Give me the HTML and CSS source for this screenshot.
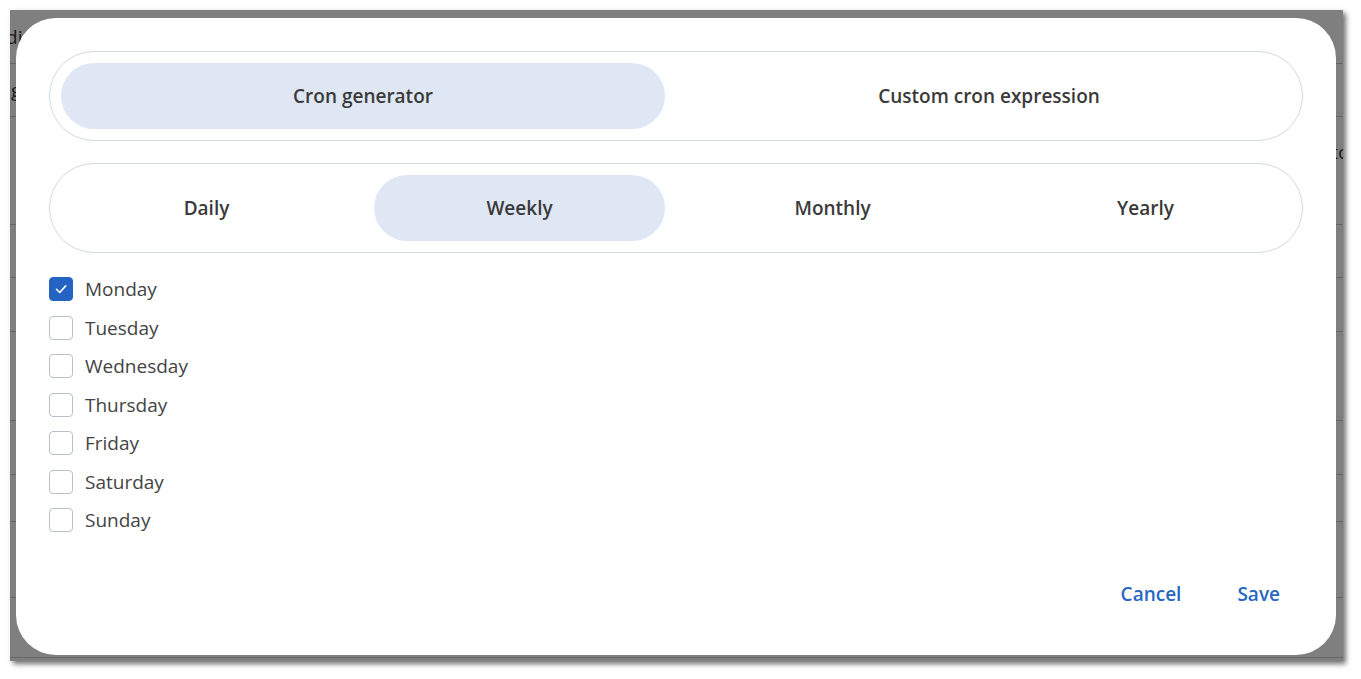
FILE: index.html
```html
<!DOCTYPE html>
<html lang="en">
<head>
<meta charset="utf-8">
<title>Cron generator</title>
<link rel="stylesheet" href="styles.css">
</head>
<body>
<div class="frame">
  <div class="page">
    <div class="bg-row r1"><span class="bg-left">Periodic</span><span class="bg-right"></span></div>
    <div class="bg-row r2"><span class="bg-left">Settings</span></div>
    <div class="bg-row r3"><span class="bg-left">Start</span><span class="bg-right">Stop</span></div>
    <div class="bg-row r4"><span class="bg-left">Limit</span></div>
    <div class="bg-row r5"><span class="bg-left"></span></div>
    <div class="bg-row r6"><span class="bg-left"></span></div>
    <div class="bg-row r7"><span class="bg-left"></span></div>
    <div class="bg-row r8"><span class="bg-left link">View</span></div>
    <div class="bg-row r9"><span class="bg-left">Help?</span></div>
    <div class="bg-row r10"><span class="bg-left"></span></div>
  </div>
  <div class="overlay"></div>
  <div class="dialog">
    <div class="seg seg-two">
      <button class="seg-item active">Cron generator</button>
      <button class="seg-item">Custom cron expression</button>
    </div>
    <div class="seg seg-four">
      <button class="seg-item">Daily</button>
      <button class="seg-item active">Weekly</button>
      <button class="seg-item">Monthly</button>
      <button class="seg-item">Yearly</button>
    </div>
    <div class="days">
      <label class="day"><span class="box checked"><svg viewBox="0 0 24 24" width="24" height="24"><path d="M7.5 12.3l3.2 3.2 6-6.6" fill="none" stroke="#fff" stroke-width="1.6" stroke-linecap="round" stroke-linejoin="round"/></svg></span><span class="day-label">Monday</span></label>
      <label class="day"><span class="box"></span><span class="day-label">Tuesday</span></label>
      <label class="day"><span class="box"></span><span class="day-label">Wednesday</span></label>
      <label class="day"><span class="box"></span><span class="day-label">Thursday</span></label>
      <label class="day"><span class="box"></span><span class="day-label">Friday</span></label>
      <label class="day"><span class="box"></span><span class="day-label">Saturday</span></label>
      <label class="day"><span class="box"></span><span class="day-label">Sunday</span></label>
    </div>
    <div class="footer">
      <button class="btn">Cancel</button>
      <button class="btn">Save</button>
    </div>
  </div>
</div>
</body>
</html>
```

FILE: styles.css
```css
* { box-sizing: border-box; }
html, body { margin: 0; padding: 0; background: #ffffff; }
body { padding: 10px; font-family: "Open Sans", "Liberation Sans", sans-serif; }

.frame {
  position: relative;
  width: 1333px;
  height: 651px;
  overflow: hidden;
  box-shadow: 3px 3px 5px rgba(0,0,0,0.55);
}

.page {
  height: 100%;
  background: #ffffff;
  display: flex;
  flex-direction: column;
}
.bg-row {
  display: flex;
  justify-content: space-between;
  align-items: center;
  border-bottom: 1px solid #cfcfcf;
  font-size: 19px;
  color: #333;
  margin-left: -50px;
  margin-right: -18px;
}
.bg-left.link { color: #1a3fa0; }
.r1 { height: 54px; }
.r2 { height: 53px; }
.r3 { height: 108px; align-items: flex-start; padding-top: 22px; }
.r4 { height: 53px; }
.r5 { height: 54px; }
.r6 { height: 89px; }
.r7 { height: 54px; }
.r8 { height: 47px; }
.r9 { height: 76px; }
.r10 { height: 60px; }

.overlay {
  position: absolute;
  inset: 0;
  background: rgba(0,0,0,0.5);
}

.dialog {
  position: absolute;
  left: 6px;
  top: 8px;
  width: 1320px;
  height: 637px;
  background: #ffffff;
  border-radius: 40px;
  padding: 33px 33px 0 33px;
  display: flex;
  flex-direction: column;
}

.seg {
  height: 90px;
  border: 1px solid #d3d8dd;
  border-radius: 45px;
  padding: 11px;
  display: flex;
  gap: 22px;
}
.seg + .seg { margin-top: 22px; }
.seg-item {
  flex: 1;
  border: 0;
  background: transparent;
  border-radius: 33px;
  font-family: "Open Sans", "Liberation Sans", sans-serif;
  font-size: 19px;
  font-weight: 600;
  color: #3a3a3a;
  padding: 0 0 1px 0;
  cursor: pointer;
}
.seg-item.active { background: #dee7f3; }

.days {
  margin-top: 24px;
  display: flex;
  flex-direction: column;
  gap: 14.5px;
}
.day {
  display: flex;
  align-items: center;
  height: 24px;
}
.box {
  width: 24px;
  height: 24px;
  border: 1px solid #b7c1cb;
  border-radius: 4px;
  background: #fff;
  display: block;
  flex: none;
}
.box svg { display: block; margin: -1px; }
.box.checked { background: #2563c2; border-color: #2563c2; }
.day-label {
  margin-left: 12px;
  font-size: 19px;
  color: #444444;
}

.footer {
  margin-top: 42px;
  display: flex;
  justify-content: flex-end;
  gap: 10px;
}
.btn {
  height: 40px;
  padding: 0 23px;
  border: 0;
  background: transparent;
  font-family: "Open Sans", "Liberation Sans", sans-serif;
  font-size: 19px;
  font-weight: 600;
  color: #2967c3;
  cursor: pointer;
}
```
